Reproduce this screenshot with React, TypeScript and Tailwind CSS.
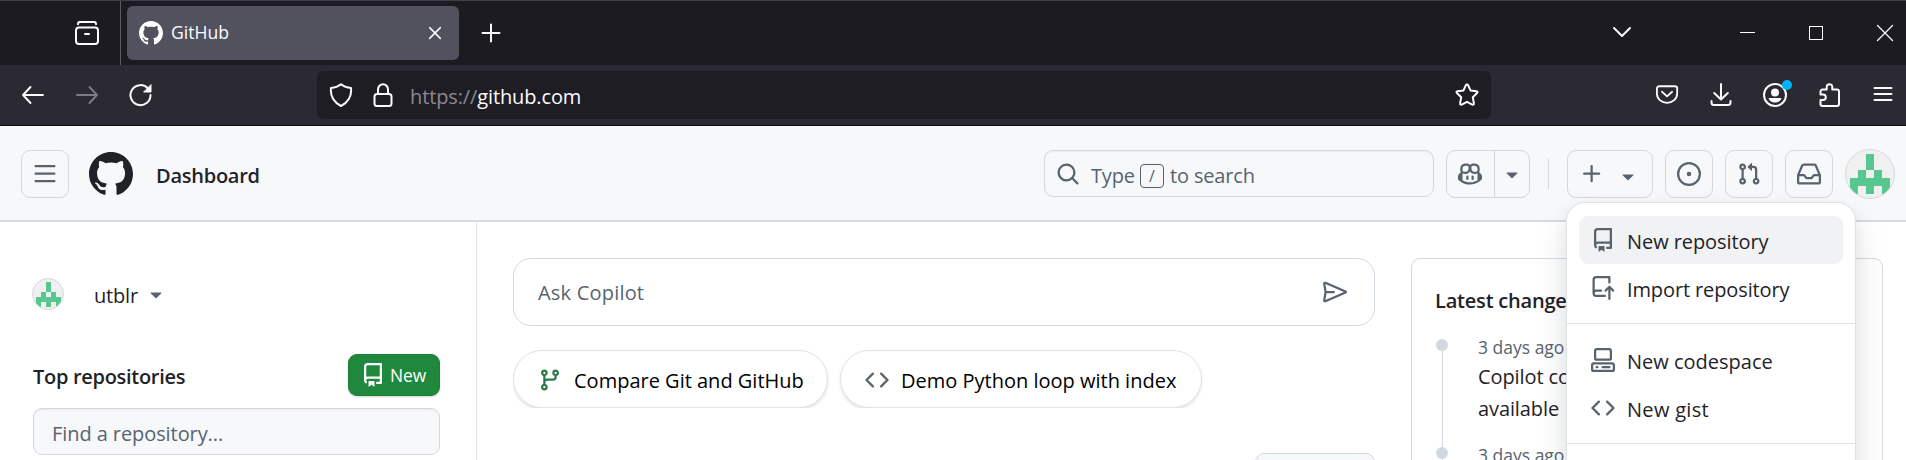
import type { ReactNode } from 'react';

const PATHS = {
  mark: 'M8 0c4.42 0 8 3.58 8 8a8.013 8.013 0 0 1-5.45 7.59c-.4.08-.55-.17-.55-.38 0-.27.01-1.13.01-2.2 0-.75-.25-1.23-.54-1.48 1.78-.2 3.65-.88 3.65-3.95 0-.88-.31-1.59-.82-2.15.08-.2.36-1.02-.08-2.12 0 0-.67-.22-2.2.82-.64-.18-1.32-.27-2-.27-.68 0-1.36.09-2 .27-1.53-1.03-2.2-.82-2.2-.82-.44 1.1-.16 1.92-.08 2.12-.51.56-.82 1.28-.82 2.15 0 3.06 1.86 3.75 3.64 3.95-.23.2-.44.55-.51 1.07-.46.21-1.61.55-2.33-.66-.15-.24-.6-.83-1.23-.82-.67.01-.27.38.01.53.34.19.73.9.82 1.13.16.45.68 1.31 2.69.94 0 .67.01 1.3.01 1.49 0 .21-.15.45-.55.38A7.995 7.995 0 0 1 0 8c0-4.42 3.58-8 8-8Z',
  repo: 'M2 2.5A2.5 2.5 0 0 1 4.5 0h8.75a.75.75 0 0 1 .75.75v12.5a.75.75 0 0 1-.75.75h-2.5a.75.75 0 0 1 0-1.5h1.75v-2h-8a1 1 0 0 0-.714 1.7.75.75 0 1 1-1.072 1.05A2.495 2.495 0 0 1 2 11.5Zm10.5-1h-8a1 1 0 0 0-1 1v6.708A2.486 2.486 0 0 1 4.5 9h8ZM5 12.25a.25.25 0 0 1 .25-.25h3.5a.25.25 0 0 1 .25.25v3.25a.25.25 0 0 1-.4.2l-1.45-1.087a.249.249 0 0 0-.3 0L5.4 15.7a.25.25 0 0 1-.4-.2Z',
  repoPush: 'M1 2.5A2.5 2.5 0 0 1 3.5 0h8.75a.75.75 0 0 1 .75.75v3.5a.75.75 0 0 1-1.5 0V1.5h-8a1 1 0 0 0-1 1v6.708A2.493 2.493 0 0 1 3.5 9h3.25a.75.75 0 0 1 0 1.5H3.5a1 1 0 0 0 0 2h5.75a.75.75 0 0 1 0 1.5H3.5A2.5 2.5 0 0 1 1 11.5Zm13.23 7.79-1.22-1.22v6.18a.75.75 0 0 1-1.5 0V9.07l-1.22 1.22a.749.749 0 0 1-1.275-.326.749.749 0 0 1 .215-.734l2.5-2.5a.75.75 0 0 1 1.06 0l2.5 2.5a.749.749 0 0 1-.326 1.275.749.749 0 0 1-.734-.215Z',
  codespaces: 'M0 11.25c0-.966.784-1.75 1.75-1.75h12.5c.966 0 1.75.784 1.75 1.75v3A1.75 1.75 0 0 1 14.25 16H1.75A1.75 1.75 0 0 1 0 14.25Zm2-9.5C2 .784 2.784 0 3.75 0h8.5C13.216 0 14 .784 14 1.75v5a1.75 1.75 0 0 1-1.75 1.75h-8.5A1.75 1.75 0 0 1 2 6.75Zm1.75-.25a.25.25 0 0 0-.25.25v5c0 .138.112.25.25.25h8.5a.25.25 0 0 0 .25-.25v-5a.25.25 0 0 0-.25-.25Zm-2 9.5a.25.25 0 0 0-.25.25v3c0 .138.112.25.25.25h12.5a.25.25 0 0 0 .25-.25v-3a.25.25 0 0 0-.25-.25ZM7 12.75a.75.75 0 0 1 .75-.75h4.5a.75.75 0 0 1 0 1.5h-4.5a.75.75 0 0 1-.75-.75Zm-4 0a.75.75 0 0 1 .75-.75h.5a.75.75 0 0 1 0 1.5h-.5a.75.75 0 0 1-.75-.75Z',
  code: 'm11.28 3.22 4.25 4.25a.75.75 0 0 1 0 1.06l-4.25 4.25a.749.749 0 0 1-1.275-.326.749.749 0 0 1 .215-.734L13.94 8l-3.72-3.72a.749.749 0 0 1 .326-1.275.749.749 0 0 1 .734.215Zm-6.56 0a.751.751 0 0 1 1.042.018.751.751 0 0 1 .018 1.042L2.06 8l3.72 3.72a.749.749 0 0 1-.326 1.275.749.749 0 0 1-.734-.215L.47 8.53a.75.75 0 0 1 0-1.06Z',
  branch: 'M9.5 3.25a2.25 2.25 0 1 1 3 2.122V6A2.5 2.5 0 0 1 10 8.5H6a1 1 0 0 0-1 1v1.128a2.251 2.251 0 1 1-1.5 0V5.372a2.25 2.25 0 1 1 1.5 0v1.836A2.493 2.493 0 0 1 6 7h4a1 1 0 0 0 1-1v-.628A2.25 2.25 0 0 1 9.5 3.25Zm-6 0a.75.75 0 1 0 1.5 0 .75.75 0 0 0-1.5 0Zm8.25-.75a.75.75 0 1 0 0 1.5.75.75 0 0 0 0-1.5ZM4.25 12a.75.75 0 1 0 0 1.5.75.75 0 0 0 0-1.5Z',
  pullRequest: 'M1.5 3.25a2.25 2.25 0 1 1 3 2.122v5.256a2.251 2.251 0 1 1-1.5 0V5.372A2.25 2.25 0 0 1 1.5 3.25Zm5.677-.177L9.573.677A.25.25 0 0 1 10 .854V2.5h1A2.5 2.5 0 0 1 13.5 5v5.628a2.251 2.251 0 1 1-1.5 0V5a1 1 0 0 0-1-1h-1v1.646a.25.25 0 0 1-.427.177L7.177 3.427a.25.25 0 0 1 0-.354ZM3.75 2.5a.75.75 0 1 0 0 1.5.75.75 0 0 0 0-1.5Zm0 9.5a.75.75 0 1 0 0 1.5.75.75 0 0 0 0-1.5Zm8.25.75a.75.75 0 1 0 1.5 0 .75.75 0 0 0-1.5 0Z',
  issue: 'M8 9.5a1.5 1.5 0 1 0 0-3 1.5 1.5 0 0 0 0 3ZM8 0a8 8 0 1 1 0 16A8 8 0 0 1 8 0ZM1.5 8a6.5 6.5 0 1 0 13 0 6.5 6.5 0 0 0-13 0Z',
  inbox: 'M2.8 2.06A1.75 1.75 0 0 1 4.41 1h7.18c.7 0 1.333.417 1.61 1.06l2.74 6.395c.04.093.06.194.06.295v4.5A1.75 1.75 0 0 1 14.25 15H1.75A1.75 1.75 0 0 1 0 13.25v-4.5c0-.101.02-.202.06-.295Zm1.61.44a.25.25 0 0 0-.23.152L1.887 8H4.75a.75.75 0 0 1 .6.3L6.625 10h2.75l1.275-1.7a.75.75 0 0 1 .6-.3h2.863L11.82 2.652a.25.25 0 0 0-.23-.152Zm10.09 7h-2.875l-1.275 1.7a.75.75 0 0 1-.6.3h-3.5a.75.75 0 0 1-.6-.3L4.375 9.5H1.5v3.75c0 .138.112.25.25.25h12.5a.25.25 0 0 0 .25-.25Z',
  copilot: 'M7.998 15.035c-4.562 0-7.873-2.914-7.998-3.749V9.338c.085-.628.677-1.686 1.588-2.065.013-.07.024-.143.036-.218.029-.183.06-.384.126-.612-.201-.508-.254-1.084-.254-1.656 0-.87.128-1.769.693-2.484.579-.733 1.494-1.124 2.724-1.261 1.206-.134 2.262.034 2.944.765.05.053.096.108.139.165.044-.057.094-.112.143-.165.682-.731 1.738-.899 2.944-.765 1.23.137 2.145.528 2.724 1.261.566.715.693 1.614.693 2.484 0 .572-.053 1.148-.254 1.656.066.228.098.429.126.612.012.076.024.148.037.218.924.385 1.522 1.471 1.591 2.095v1.872c0 .766-3.351 3.795-8.002 3.795Zm0-1.485c2.28 0 4.584-1.11 5.002-1.433V7.862l-.023-.116c-.49.21-1.075.291-1.727.291-1.146 0-2.059-.327-2.71-.991A3.222 3.222 0 0 1 8 6.303a3.24 3.24 0 0 1-.544.743c-.65.664-1.563.991-2.71.991-.652 0-1.236-.081-1.727-.291l-.023.116v4.255c.419.323 2.722 1.433 5.002 1.433ZM6.762 2.83c-.193-.206-.637-.413-1.682-.297-1.019.113-1.479.404-1.713.7-.247.312-.369.789-.369 1.554 0 .793.129 1.171.308 1.371.162.181.519.379 1.442.379.853 0 1.339-.235 1.638-.54.315-.322.527-.827.617-1.553.117-.935-.037-1.395-.241-1.614Zm4.155-.297c-1.044-.116-1.488.091-1.681.297-.204.219-.359.679-.242 1.614.091.726.303 1.231.618 1.553.299.305.784.54 1.638.54.922 0 1.28-.198 1.442-.379.179-.2.308-.578.308-1.371 0-.765-.123-1.242-.37-1.554-.233-.296-.693-.587-1.713-.7ZM6.25 9.037a.75.75 0 0 1 .75.75v1.501a.75.75 0 0 1-1.5 0V9.787a.75.75 0 0 1 .75-.75Zm4.25.75v1.501a.75.75 0 0 1-1.5 0V9.787a.75.75 0 0 1 1.5 0Z',
  search: 'M10.68 11.74a6 6 0 0 1-7.922-8.982 6 6 0 0 1 8.982 7.922l3.04 3.04a.749.749 0 0 1-.326 1.275.749.749 0 0 1-.734-.215ZM11.5 7a4.499 4.499 0 1 0-8.997 0A4.499 4.499 0 0 0 11.5 7Z',
  plus: 'M7.75 2a.75.75 0 0 1 .75.75V7h4.25a.75.75 0 0 1 0 1.5H8.5v4.25a.75.75 0 0 1-1.5 0V8.5H2.75a.75.75 0 0 1 0-1.5H7V2.75A.75.75 0 0 1 7.75 2Z',
  bars: 'M1 2.75A.75.75 0 0 1 1.75 2h12.5a.75.75 0 0 1 0 1.5H1.75A.75.75 0 0 1 1 2.75Zm0 5A.75.75 0 0 1 1.75 7h12.5a.75.75 0 0 1 0 1.5H1.75A.75.75 0 0 1 1 7.75ZM1.75 12h12.5a.75.75 0 0 1 0 1.5H1.75a.75.75 0 0 1 0-1.5Z',
  triangle: 'm4.427 7.427 3.396 3.396a.25.25 0 0 0 .354 0l3.396-3.396A.25.25 0 0 0 11.396 7H4.604a.25.25 0 0 0-.177.427Z',
  send: 'M.989 8 .064 2.68a1.342 1.342 0 0 1 1.85-1.462l13.402 5.744a1.13 1.13 0 0 1 0 2.076L1.913 14.782a1.343 1.343 0 0 1-1.85-1.463L.99 8Zm.603-5.288L2.38 7.25h4.87a.75.75 0 0 1 0 1.5H2.38l-.788 4.538L13.929 8Z',
};

function Icon({ name, className = 'size-6 text-[#59636e]' }: { name: keyof typeof PATHS; className?: string }) {
  return (
    <svg viewBox="0 0 16 16" fill="currentColor" className={`shrink-0 ${className}`}>
      <path d={PATHS[name]} />
    </svg>
  );
}

function Line({ children, className = 'size-6 text-[#fbfbfe]', w = 2 }: { children: ReactNode; className?: string; w?: number }) {
  return (
    <svg
      viewBox="0 0 24 24"
      fill="none"
      stroke="currentColor"
      strokeWidth={w}
      strokeLinecap="round"
      strokeLinejoin="round"
      className={`shrink-0 ${className}`}
    >
      {children}
    </svg>
  );
}

function Identicon({ className }: { className: string }) {
  return (
    <div className={`shrink-0 overflow-hidden rounded-full border border-[#d5d9dd] bg-[#f0f0f0] ${className}`}>
      <svg viewBox="0 0 48 48" shapeRendering="crispEdges" fill="#57c78f" className="size-full">
        <path d="M20 4h8v16h8v8h8v16h-8v-8h-8v8h-8v-8h-8v8H4V28h8v-8h8zM20 20v8h8v-8z" fillRule="evenodd" />
      </svg>
    </div>
  );
}

function Browser() {
  return (
    <>
      <div className="flex h-[65px] items-center border-t border-[#3d4148] bg-[#1c1b22] text-[#fbfbfe]">
        <div className="flex h-full w-[121px] items-center border-r border-[#5b5b63] pb-px pl-[75px]">
          <Line>
            <path d="M4.5 1h15" />
            <path d="M3 3.2C3 2 3.6 1 5 1h14c1.400 0 2 1 2 2.200" />
            <rect x="1" y="6.500" width="22" height="16.500" rx="3" />
            <path d="M10 13h4" />
          </Line>
        </div>
        <div className="ml-[6px] flex h-[54px] w-[332px] items-center rounded-md bg-[#52525e] pr-[16px] pl-3">
          <Icon name="mark" className="size-6 text-white" />
          <span className="mt-[-1px] ml-2 flex-1 text-[17.6px]">GitHub</span>
          <Line className="size-[16px]" w={2.3}>
            <path d="M4 4l16 16M20 4L4 20" />
          </Line>
        </div>
        <Line className="ml-[20px] size-6">
          <path d="M12 3.500v17M3.500 12h17" />
        </Line>
        <Line className="mt-[-3px] ml-[1107px] size-6">
          <path d="M4 8l8 8 8-8" />
        </Line>
        <div className="mt-[-2px] ml-[106px] h-px w-[15px] bg-white" />
        <div className="mt-[-1px] ml-[54px] size-[14px] border border-white" />
        <Line className="mt-[-1px] ml-[50px] size-6" w={1.3}>
          <path d="M4.500 4.500l15 15M19.500 4.500l-15 15" />
        </Line>
      </div>

      <div className="flex h-[61px] items-center border-b border-[#0c0c0f] bg-[#2b2a33] pl-[21px] text-[#fbfbfe]">
        <Line w={1.9}>
          <path d="M22 12H2M9.500 4L2 12l7.500 8" />
        </Line>
        <Line w={1.9} className="ml-[30px] size-6 text-[#7d7c85]">
          <path d="M2 12h20M14.500 4l7.500 8-7.500 8" />
        </Line>
        <Line className="ml-[30px] size-6">
          <path d="M21.500 12A10 10 0 1 1 19 5.500" />
          <path d="M22 2v7h-7z" fill="currentColor" strokeWidth="1" />
        </Line>
        <div className="ml-[164px] flex h-12 w-[1174px] items-center rounded-md bg-[#1e1d24] pl-3">
          <Line>
            <path d="M12 1.200c3 2.500 6.500 3.500 10 3.800 1 8.500-3.500 15-10 18C5.500 20 1 13.500 2 5c3.500-.3 7-1.300 10-3.800z" />
          </Line>
          <Line className="ml-[18px] size-6">
            <rect x="3.500" y="11" width="17" height="12" rx="2.500" />
            <path d="M7 11V6.500a5 5.300 0 0 1 10 0V11" />
          </Line>
          <span className="ml-[15px] flex-1 pt-[3px] text-[20px] tracking-[-0.12px]">
            <span className="text-[#8a8991]">https://</span>github.com
          </span>
          <Line className="mr-3 size-6">
            <path d="M10.900 2.200a1.200 1.200 0 0 1 2.200 0l2.400 5.200 6 .8a1 1 0 0 1 .6 1.800l-4.300 4.200 1.100 6.200a1.100 1.100 0 0 1-1.600 1.200L12 18.800l-5.300 2.800a1.100 1.100 0 0 1-1.600-1.200l1.100-6.200L1.900 10a1 1 0 0 1 .6-1.800l6-.8z" />
          </Line>
        </div>
        <Line className="ml-[164px] size-6">
          <path d="M3.500 3h17A2.500 2.500 0 0 1 23 5.500V11a11 10 0 0 1-22 0V5.500A2.500 2.500 0 0 1 3.500 3zM6.500 9l5.500 5 5.500-5" transform="translate(1 .5) scale(.92)" />
        </Line>
        <Line className="ml-[30px] size-6">
          <path d="M12 1v15M5.200 10l6.800 6.500 6.800-6.500M2.500 18v1.500A2.500 2.500 0 0 0 5 22h14a2.500 2.500 0 0 0 2.500-2.500V18" />
        </Line>
        <div className="relative ml-[30px] h-6 w-6">
          <Line>
            <circle cx="12" cy="12" r="11" />
            <circle cx="12" cy="9.500" r="4" fill="currentColor" stroke="none" />
            <path d="M5.500 15h13c-.5 2.700-3.300 4.500-6.500 4.500S6 17.700 5.500 15z" fill="currentColor" stroke="none" />
          </Line>
          <span className="absolute top-[-3px] right-[-5px] size-[10px] rounded-full bg-[#00b3f4]" />
        </div>
        <Line className="ml-[31px] size-6">
          <path d="M8.700 6.500V4a2.800 2.800 0 0 1 5.600 0v2.500H19a2 2 0 0 1 2 2V21a2 2 0 0 1-2 2H4.500a2 2 0 0 1-2-2v-4H5a2.800 2.800 0 0 0 0-5.600H2.500V8.500a2 2 0 0 1 2-2z" />
        </Line>
        <Line className="ml-[29px] size-6">
          <path d="M3.500 5h17M3.500 11h17M3.500 17h17" />
        </Line>
      </div>
    </>
  );
}

const BTN = 'flex h-12 shrink-0 items-center justify-center rounded-[9px] border border-[#d1d9e0]';

function Header() {
  return (
    <header className="flex h-24 items-center border-b-2 border-[#d5dce2] bg-[#f6f8fa] pt-[2px] pl-[21px]">
      <div className={`${BTN} w-12`}>
        <Icon name="bars" />
      </div>
      <Icon name="mark" className="ml-5 size-11 text-[#1f2328]" />
      <span className="ml-[23px] w-[888px] pt-[4px] text-[20px] font-semibold tracking-[-0.25px]">Dashboard</span>
      <div className="mt-[-1px] flex h-[47px] w-[390px] shrink-0 items-center rounded-[9px] border border-[#d1d9e0] pl-[11px] text-[#59636e] shadow-[inset_0_1px_1px_rgba(31,35,40,0.06)]">
        <Icon name="search" />
        <span className="ml-[11px] w-[49px] pt-[4px] text-[20px] tracking-[-0.2px]">Type</span>
        <span className="mt-[4px] flex h-6 w-6 items-center justify-center rounded border border-[#59636e] text-[16px]">/</span>
        <span className="ml-[6px] pt-[4px] text-[20px] tracking-[-0.15px]">to search</span>
      </div>
      <div className={`${BTN} ml-3 w-[84px]`}>
        <div className="flex h-full w-[48px] items-center border-r border-[#d1d9e0] pl-[11px]">
          <Icon name="copilot" />
        </div>
        <div className="flex flex-1 justify-center">
          <Icon name="triangle" />
        </div>
      </div>
      <div className="mx-[18px] h-[30px] w-px bg-[#d1d9e0]" />
      <div className={`${BTN} w-[86px]`}>
        <Icon name="plus" />
        <Icon name="triangle" className="mt-[3px] ml-3 size-6 text-[#59636e]" />
      </div>
      <div className={`${BTN} ml-3 w-12`}>
        <Icon name="issue" />
      </div>
      <div className={`${BTN} ml-3 w-12`}>
        <Icon name="pullRequest" />
      </div>
      <div className={`${BTN} ml-3 w-12`}>
        <Icon name="inbox" />
      </div>
      <Identicon className="ml-3 size-[50px]" />
    </header>
  );
}

function Sidebar() {
  return (
    <aside className="w-[477px] shrink-0 border-r border-[#dde3e8] pt-14 pr-9 pl-8">
      <div className="flex h-8 items-center">
        <Identicon className="size-8" />
        <span className="ml-[30px] pt-[4px] text-[20px] tracking-[-0.2px]">utblr</span>
        <Icon name="triangle" className="ml-[6px] size-6 text-[#59636e]" />
      </div>
      <div className="mt-11 flex h-[42px] items-center justify-between">
        <span className="pt-[4px] pl-px text-[20px] font-semibold tracking-[-0.3px]">Top repositories</span>
        <div className="flex h-[42px] w-[92px] items-center rounded-[9px] border border-[#1f7f39] bg-[#1f883d] pl-3 text-white shadow-[0_1px_2px_rgba(31,35,40,0.2)]">
          <Icon name="repo" className="size-6 text-white" />
          <span className="ml-[5px] text-[17.4px]">New</span>
        </div>
      </div>
      <div className="mt-3 ml-px flex h-[47px] items-center rounded-[9px] border border-[#d1d9e0] bg-[#f6f8fa] pt-[4px] pl-[18px] text-[20px] tracking-[-0.08px] text-[#59636e] shadow-[inset_0_1px_1px_rgba(31,35,40,0.06)]">
        Find a repository...
      </div>
    </aside>
  );
}

function Chip({ icon, color, label, className }: { icon: keyof typeof PATHS; color: string; label: string; className: string }) {
  return (
    <div className={`flex h-[58px] items-center rounded-full border border-[#dfe4e9] bg-white pl-6 text-black shadow-[0_2px_3px_rgba(31,35,40,0.12)] ${className}`}>
      <Icon name={icon} className={`mt-[2px] size-6 ${color}`} />
      <span className="ml-3 pt-[3px] text-[20px]">{label}</span>
    </div>
  );
}

function Feed() {
  return (
    <main className="w-[862px] shrink-0 pt-9">
      <div className="flex h-[68px] items-center justify-between rounded-[18px] border border-[#d1d9e0] pr-[27px] pl-6 text-[20px] tracking-[0.2px] text-[#59636e]">
        <span className="pt-px">Ask Copilot</span>
        <Icon name="send" />
      </div>
      <div className="mt-6 flex h-[58px] gap-3 overflow-hidden">
        <Chip icon="branch" color="text-[#2c7a4b]" label="Compare Git and GitHub" className="w-[315px]" />
        <Chip icon="code" color="text-[#59636e]" label="Demo Python loop with index" className="w-[362px]" />
      </div>
      <div className="mt-[45px] ml-[742px] h-[42px] w-[120px] rounded-[9px] border border-[#d1d9e0] bg-[#f6f8fa]" />
    </main>
  );
}

function Change({ lines }: { lines: string[] }) {
  return (
    <li className="flex h-[108px]">
      <div className="flex w-3 shrink-0 flex-col items-center">
        <span className="size-3 shrink-0 rounded-full bg-[#d1d9e0]" />
        <span className="w-px flex-1 bg-[#d1d9e0]" />
      </div>
      <div className="mt-[-6px] ml-[30px]">
        <div className="h-[28px] text-[17.5px] leading-[28px] text-[#59636e]">3 days ago</div>
        {lines.map((line) => (
          <div key={line} className="text-[20px] leading-[32px] tracking-[-0.1px]">
            {line}
          </div>
        ))}
      </div>
    </li>
  );
}

function Changelog() {
  return (
    <aside className="mt-9 ml-9 h-[500px] w-[472px] shrink-0 rounded-[9px] border border-[#d1d9e0] pl-6">
      <h2 className="mt-[26px] ml-[-1px] text-[20px] leading-[32px] font-semibold tracking-[-0.2px]">Latest change</h2>
      <ul className="mt-[22px]">
        <Change lines={['Copilot co', 'available']} />
        <Change lines={[]} />
      </ul>
    </aside>
  );
}

function MenuItem({ icon, label, className = '' }: { icon: keyof typeof PATHS; label: string; className?: string }) {
  return (
    <div className={`flex h-12 items-center rounded-[9px] pl-3 ${className}`}>
      <Icon name={icon} />
      <span className="ml-3 pt-[3px] text-[20px]">{label}</span>
    </div>
  );
}

export default function App() {
  return (
    <div className="relative flex h-[460px] w-[1906px] flex-col overflow-hidden bg-white font-['Open_Sans','Noto_Sans',sans-serif] text-[#1f2328]">
      <Browser />
      <Header />
      <div className="flex min-h-0 flex-1 overflow-hidden">
        <Sidebar />
        <div className="w-9 shrink-0" />
        <Feed />
        <Changelog />
      </div>
      <div className="absolute top-[203px] left-[1567px] h-[420px] w-[288px] rounded-[18px] bg-white pt-[13px] shadow-[0_0_0_1px_#dde2e7,0_9px_18px_rgba(37,41,46,0.08),0_18px_36px_rgba(37,41,46,0.12)]">
        <div className="px-3">
          <MenuItem icon="repo" label="New repository" className="bg-[#f0f2f4] tracking-[-0.08px]" />
          <MenuItem icon="repoPush" label="Import repository" className="tracking-[-0.12px]" />
        </div>
        <div className="my-[11px] h-px bg-[#dde2e7]" />
        <div className="px-3 pt-px">
          <MenuItem icon="codespaces" label="New codespace" />
          <MenuItem icon="code" label="New gist" className="tracking-[0.3px]" />
        </div>
        <div className="mt-[11px] h-px bg-[#dde2e7]" />
      </div>
    </div>
  );
}
